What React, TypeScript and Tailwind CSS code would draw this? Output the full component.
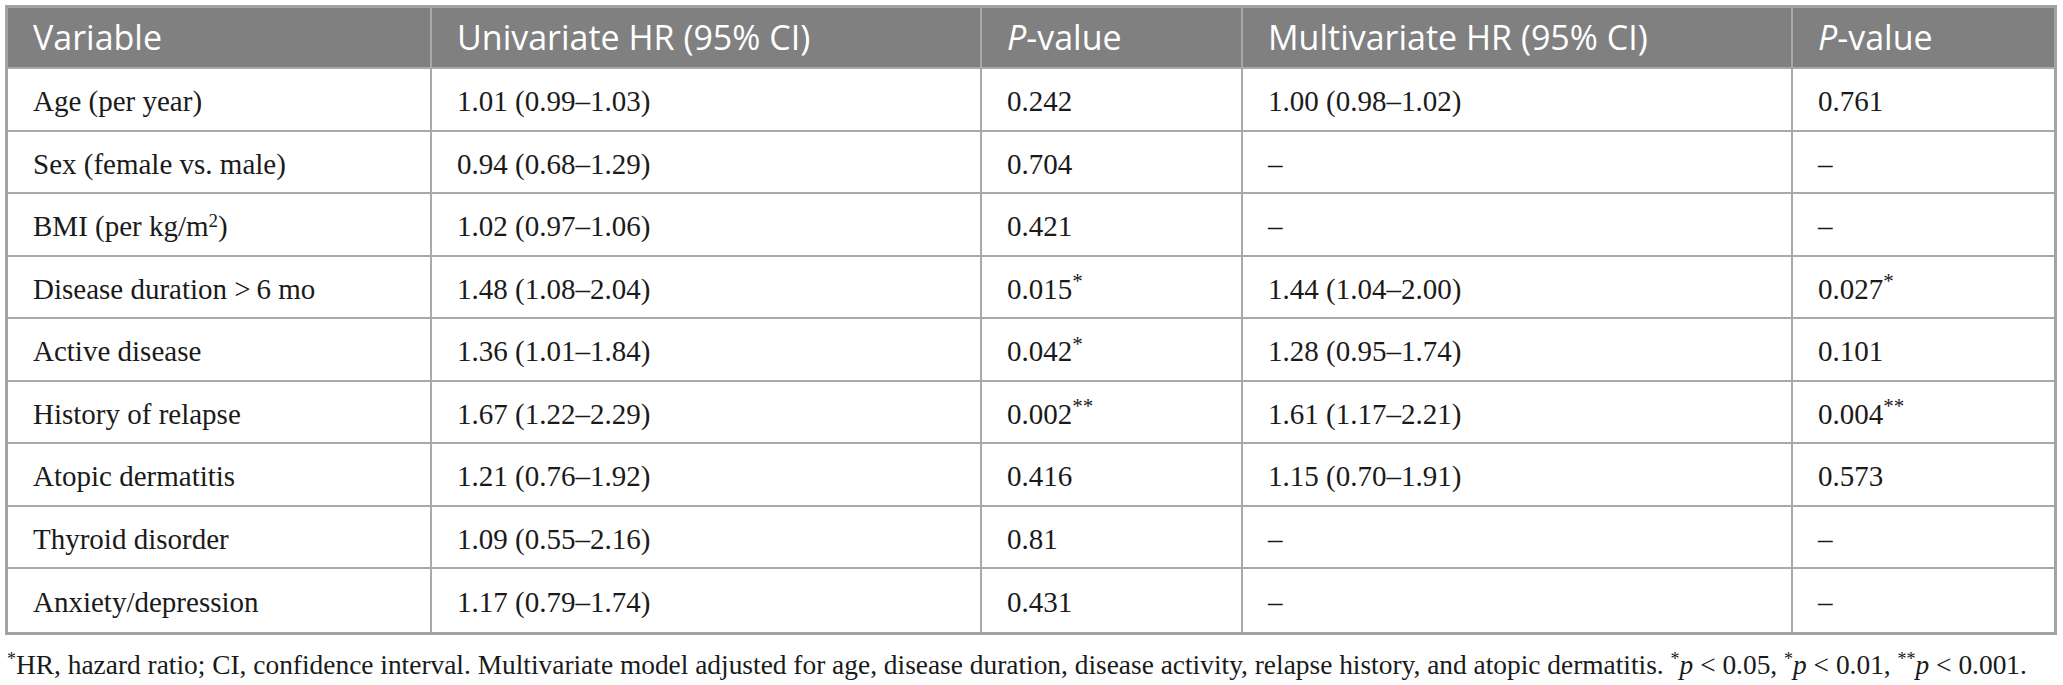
import React from "react";

type Row = {
  variable: React.ReactNode;
  uni: string;
  uniP: React.ReactNode;
  multi: string;
  multiP: React.ReactNode;
};

const star = (n: number) => <sup className="text-[21px]">{"*".repeat(n)}</sup>;

const rows: Row[] = [
  { variable: "Age (per year)", uni: "1.01 (0.99–1.03)", uniP: "0.242", multi: "1.00 (0.98–1.02)", multiP: "0.761" },
  { variable: "Sex (female vs. male)", uni: "0.94 (0.68–1.29)", uniP: "0.704", multi: "–", multiP: "–" },
  {
    variable: (
      <>
        BMI (per kg/m<sup className="text-[19px]">2</sup>)
      </>
    ),
    uni: "1.02 (0.97–1.06)",
    uniP: "0.421",
    multi: "–",
    multiP: "–",
  },
  {
    variable: "Disease duration >\u20096 mo",
    uni: "1.48 (1.08–2.04)",
    uniP: <>0.015{star(1)}</>,
    multi: "1.44 (1.04–2.00)",
    multiP: <>0.027{star(1)}</>,
  },
  {
    variable: "Active disease",
    uni: "1.36 (1.01–1.84)",
    uniP: <>0.042{star(1)}</>,
    multi: "1.28 (0.95–1.74)",
    multiP: "0.101",
  },
  {
    variable: "History of relapse",
    uni: "1.67 (1.22–2.29)",
    uniP: <>0.002{star(2)}</>,
    multi: "1.61 (1.17–2.21)",
    multiP: <>0.004{star(2)}</>,
  },
  { variable: "Atopic dermatitis", uni: "1.21 (0.76–1.92)", uniP: "0.416", multi: "1.15 (0.70–1.91)", multiP: "0.573" },
  { variable: "Thyroid disorder", uni: "1.09 (0.55–2.16)", uniP: "0.81", multi: "–", multiP: "–" },
  { variable: "Anxiety/depression", uni: "1.17 (0.79–1.74)", uniP: "0.431", multi: "–", multiP: "–" },
];

const widths = ["w-[424px]", "w-[550px]", "w-[261px]", "w-[550px]", "w-[261px]"];

function HeadCell({ i, children }: { i: number; children: React.ReactNode }) {
  return (
    <div
      className={`${widths[i]} shrink-0 flex items-center pl-[25px] ${i < 4 ? "border-r-2 border-[#a9a9a9]" : ""}`}
    >
      {children}
    </div>
  );
}

function Cell({ i, children }: { i: number; children: React.ReactNode }) {
  return (
    <div
      className={`${widths[i]} shrink-0 flex items-center pl-[25px] pt-[5px] ${i < 4 ? "border-r-2 border-[#a9a9a9]" : ""}`}
    >
      <span className="whitespace-nowrap">{children}</span>
    </div>
  );
}

export default function App() {
  return (
    <div className="w-[2063px] h-[685px] bg-white pl-[5px] pt-[5px] overflow-hidden">
      <div className="w-[2052px] border-[3px] border-[#a3a3a3]">
        {/* header */}
        <div className="flex h-[61px] bg-[#808080] border-b-2 border-[#a9a9a9] text-white text-[34px] font-['Open_Sans',sans-serif]">
          <HeadCell i={0}>Variable</HeadCell>
          <HeadCell i={1}>Univariate HR (95% CI)</HeadCell>
          <HeadCell i={2}>
            <span>
              <i>P</i>-value
            </span>
          </HeadCell>
          <HeadCell i={3}>Multivariate HR (95% CI)</HeadCell>
          <HeadCell i={4}>
            <span>
              <i>P</i>-value
            </span>
          </HeadCell>
        </div>
        {/* body */}
        <div className="font-['Liberation_Serif',serif] text-[29px] text-[#1a1a1a]">
          {rows.map((r, idx) => (
            <div
              key={idx}
              className={`flex h-[62.5px] ${idx < rows.length - 1 ? "border-b-2 border-[#a9a9a9]" : ""}`}
            >
              <Cell i={0}>{r.variable}</Cell>
              <Cell i={1}>{r.uni}</Cell>
              <Cell i={2}>{r.uniP}</Cell>
              <Cell i={3}>{r.multi}</Cell>
              <Cell i={4}>{r.multiP}</Cell>
            </div>
          ))}
        </div>
      </div>
      <p className="mt-[16px] pl-[2px] leading-[28px] whitespace-nowrap font-['Liberation_Serif',serif] text-[27.4px] text-[#1a1a1a]">
        <sup className="text-[18px]">*</sup>HR, hazard ratio; CI, confidence interval. Multivariate model adjusted for
        age, disease duration, disease activity, relapse history, and atopic dermatitis.{" "}
        <sup className="text-[18px]">*</sup>
        <i>p</i> &lt; 0.05, <sup className="text-[18px]">*</sup>
        <i>p</i> &lt; 0.01, <sup className="text-[18px]">**</sup>
        <i>p</i> &lt; 0.001.
      </p>
    </div>
  );
}
